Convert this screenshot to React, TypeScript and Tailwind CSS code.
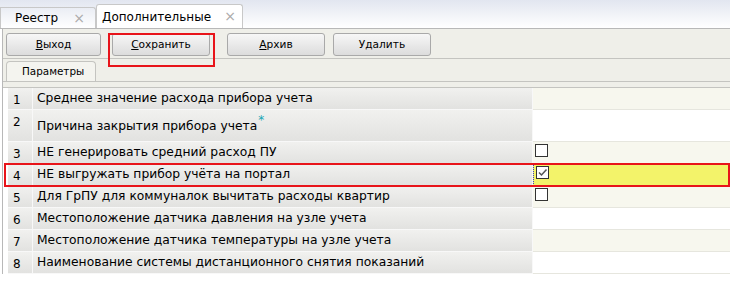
import React from "react";

const rows = [
  { n: 1, label: "Среднее значение расхода прибора учета", kind: "none", bg: "bg-[#f7f7ee]" },
  { n: 2, label: "Причина закрытия прибора учета", kind: "none", bg: "bg-white", tall: true, star: true },
  { n: 3, label: "НЕ генерировать средний расход ПУ", kind: "box", bg: "bg-[#f7f7ee]" },
  { n: 4, label: "НЕ выгружать прибор учёта на портал", kind: "checked", bg: "bg-[#f3f36a]", active: true },
  { n: 5, label: "Для ГрПУ для коммуналок вычитать расходы квартир", kind: "box", bg: "bg-[#f7f7ee]" },
  { n: 6, label: "Местоположение датчика давления на узле учета", kind: "none", bg: "bg-white" },
  { n: 7, label: "Местоположение датчика температуры на узле учета", kind: "none", bg: "bg-[#f7f7ee]" },
  { n: 8, label: "Наименование системы дистанционного снятия показаний", kind: "none", bg: "bg-white" },
];

function Btn({ label, u, w }: { label: string; u: string; w: string }) {
  return (
    <div
      className={`${w} h-[23px] rounded-[3px] border border-[#a9a9a9] bg-gradient-to-b from-[#f7f7f7] to-[#dcdcdc] flex items-center justify-center text-[10.6px] text-black`}
    >
      <span>
        <span className="underline">{u}</span>
        {label}
      </span>
    </div>
  );
}

function Check({ on }: { on?: boolean }) {
  return (
    <div className="w-[13px] h-[13px] border border-[#333] bg-white flex items-center justify-center">
      {on && (
        <svg width="11" height="11" viewBox="0 0 11 11">
          <path d="M2 5.5 L4.5 8 L9.5 2.5" fill="none" stroke="#555" strokeWidth="1.5" />
        </svg>
      )}
    </div>
  );
}

export default function App() {
  return (
    <div className="w-[730px] h-[285px] bg-white overflow-hidden font-['DejaVu_Sans',sans-serif] text-[12.3px] text-black relative">
      {/* Вкладки окна */}
      <div className="h-[29px] bg-gradient-to-b from-[#e2e6f0] to-white border-b border-[#b8b8b8] flex items-end">
        <div className="w-[96px] h-[21px] border border-b-0 border-[#c8c8c8] rounded-tr-[3px] flex items-center pl-[14px] pr-[10px] justify-between text-[12px]">
          <span>Реестр</span>
          <span className="text-[#aaa] text-[14px]">×</span>
        </div>
        <div className="w-[147px] h-[24px] bg-white border border-b-0 border-[#c8c8c8] rounded-t-[3px] flex items-center pl-[5px] pr-[6px] justify-between text-[12px]">
          <span>Дополнительные</span>
          <span className="text-[#aaa] text-[14px]">×</span>
        </div>
      </div>

      <div className="border-l border-[#b8b8b8] ml-[2px]">
        {/* Панель кнопок */}
        <div className="h-[30px] bg-[#efefe9] border-b border-[#c4c4c0] flex items-center pl-[3px] pt-[2px]">
          <Btn u="В" label="ыход" w="w-[95px]" />
          <div className="w-[11px]" />
          <Btn u="С" label="охранить" w="w-[98px]" />
          <div className="w-[17px]" />
          <Btn u="А" label="рхив" w="w-[98px]" />
          <div className="w-[8px]" />
          <Btn u="" label="Удалить" w="w-[98px]" />
        </div>

        {/* Вкладка Параметры */}
        <div className="h-[23px] bg-[#efefe9] border-b border-[#c4c4c0] flex items-end pl-[3px]">
          <div className="w-[90px] h-[20px] bg-[#f4f4ef] border border-b-0 border-[#c4c4c0] rounded-t-[4px] flex items-center pl-[15px] text-[10.4px]">
            Параметры
          </div>
        </div>
        <div className="h-[6px] bg-[#efefe9] border-b border-[#c4c4c0]" />

        {/* Таблица */}
        <div className="pl-[5px]">
          {rows.map((r) => (
            <div key={r.n} className={`flex ${r.tall ? "h-[32px]" : "h-[22px]"}`}>
              <div className="w-[25px] bg-gradient-to-b from-[#f1f1ef] to-[#e2e2e0] border-r border-b border-[#f8f8f8] pl-[5px] pt-[3px] text-[12px]">
                {r.n}
              </div>
              <div
                className={`w-[500px] bg-gradient-to-b from-[#f1f1ef] to-[#e2e2e0] border-r border-b border-[#f8f8f8] pl-[4px] flex ${
                  r.tall ? "items-end pb-[6px]" : "items-center"
                }`}
              >
                <span>
                  {r.label}
                  {r.star && <sup className="text-[#1aa6b5] text-[12px] ml-[1px]">*</sup>}
                </span>
              </div>
              <div
                className={`flex-1 ${r.bg} border-b ${
                  r.active ? "border-dotted border-[#3a3ad0] border-l" : "border-[#e6e6de]"
                } pl-[2px] pt-[2px]`}
              >
                {r.kind === "box" && <Check />}
                {r.kind === "checked" && <Check on />}
              </div>
            </div>
          ))}
        </div>
      </div>

      {/* Красные рамки выделения */}
      <div className="absolute left-[108px] top-[33px] w-[107px] h-[34px] border-2 border-[#e8141a]" />
      <div className="absolute left-[4px] top-[163px] w-[726px] h-[24px] border-2 border-[#e8141a]" />
    </div>
  );
}
